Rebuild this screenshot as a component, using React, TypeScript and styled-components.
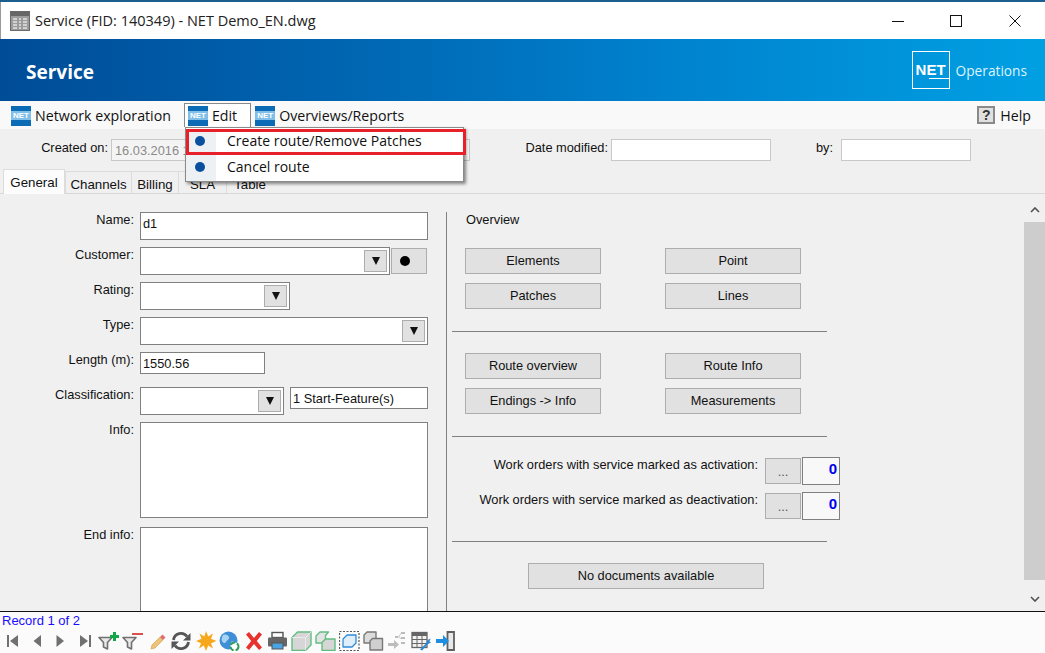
import styled, { createGlobalStyle } from "styled-components";

const GlobalStyle = createGlobalStyle`
  html, body {
    margin: 0;
    padding: 0;
    overflow: hidden;
    background: #f0f0f0;
  }
  * {
    box-sizing: border-box;
  }
`;

const funnel = <path d="M1 6.500h13L9.500 11.500v6.500L5.500 16v-4.500z" fill="#e8e8e8" stroke="#707070" strokeWidth="1.600" strokeLinejoin="round" />;

const TOOLS: { id: string; left: number; node: React.ReactNode }[] = [
  { id: "first", left: 7, node: <><rect x="0" y="4" width="2" height="12" fill="#707070" /><path d="M11 4v12L3 10z" fill="#707070" /></> },
  { id: "prev", left: 28, node: <path d="M13 4v12L5.500 10z" fill="#707070" /> },
  { id: "next", left: 51, node: <path d="M5.500 4v12L13 10z" fill="#707070" /> },
  { id: "last", left: 79, node: <><rect x="10" y="4" width="2" height="12" fill="#707070" /><path d="M1 4v12l8-6z" fill="#707070" /></> },
  { id: "filter-add", left: 98, node: <>{funnel}<path d="M12 5.500h9M16.500 1v9" stroke="#12a84a" strokeWidth="3" /></> },
  { id: "filter-remove", left: 122, node: <>{funnel}<path d="M10 3h11" stroke="#d9504c" strokeWidth="2" /></> },
  { id: "pencil", left: 147, node: <><path d="M5 14l8-8 3 3-8 8-4 1z" fill="#eec27a" stroke="#d8ac62" strokeWidth="0.800" /><path d="M13 6l2.500-2.500 3 3L16 9z" fill="#df6f6f" /></> },
  { id: "refresh", left: 171, node: <><path d="M2.500 9a7.500 7.500 0 0 1 13.500-3.500" fill="none" stroke="#555" strokeWidth="2.800" /><path d="M19.500 2v7.500H12z" fill="#555" /><path d="M17.500 11a7.500 7.500 0 0 1-13.500 3.500" fill="none" stroke="#555" strokeWidth="2.800" /><path d="M0.500 18v-7.500H8z" fill="#555" /></> },
  { id: "sun", left: 196, node: <path d="M10 0l2.200 5.500L17 2.500l-2 5.300 5.500 2.200-5.500 2.200 2 5.300-4.800-3-2.200 5.500-2.200-5.500-4.800 3 2-5.300L0 10l5.500-2.200-2-5.300 4.800 3z" fill="#f7a71c" /> },
  { id: "globe", left: 219, node: <><circle cx="9.500" cy="9.500" r="9" fill="#3f8fd6" /><path d="M4 4c3-1 5 0 6 2s-2 3-3 5-3 1-4-1 0-4 1-6zM12 11c2-1 4 0 4 1s-2 4-4 3z" fill="#a9d3f2" /><circle cx="15.500" cy="15.500" r="4" fill="#fff" stroke="#2f9e5b" strokeWidth="2" strokeDasharray="5 2" /></> },
  { id: "delete", left: 244, node: <path d="M2 3.500L5 1l5 6 5-6 3 2.500L12.800 10l5.200 6.500-3 2.500-5-6-5 6-3-2.500L7.200 10z" fill="#e8322d" /> },
  { id: "print", left: 267, node: <><rect x="5" y="1.500" width="11" height="5" fill="#fff" stroke="#555" strokeWidth="1.400" /><rect x="1" y="6.500" width="19" height="9" rx="1" fill="#666" /><rect x="5" y="12" width="11" height="6" fill="#4ba3e3" stroke="#555" /></> },
  { id: "box", left: 291, node: <><path d="M1 6.500L6.500 1h13.500v13L14.500 19.500H1z" fill="#d6d6d6" stroke="#62bd80" strokeWidth="1.400" strokeLinejoin="round" /><path d="M14.500 19.500V6.500H1M14.500 6.500L20 1" fill="none" stroke="#f0f0f0" strokeWidth="0.800" /></> },
  { id: "boxes", left: 315, node: <><path d="M1 5l4-4h8.500l-3 3.500V12H1z" fill="#e4e4e4" stroke="#62bd80" strokeWidth="1.400" strokeLinejoin="round" /><path d="M7 11.500l3.500-3.500H20v11.500H7z" fill="#d6d6d6" stroke="#62bd80" strokeWidth="1.400" strokeLinejoin="round" /></> },
  { id: "select", left: 339, node: <><rect x="0.500" y="0.500" width="19.500" height="19" fill="none" stroke="#555" strokeWidth="1.200" strokeDasharray="2 1.500" /><path d="M4 8l4-4h9v8l-4 4H4z" fill="#dfeefa" stroke="#2e8bd8" strokeWidth="1.300" strokeLinejoin="round" /></> },
  { id: "copy", left: 363, node: <><path d="M1 4l3-3h9v11H1z" fill="#dcdcdc" stroke="#787878" strokeWidth="1.400" strokeLinejoin="round" /><path d="M7 10l2.500-2.500H19.500V19H7z" fill="#cfcfcf" stroke="#787878" strokeWidth="1.400" strokeLinejoin="round" /></> },
  { id: "network", left: 388, node: <g fill="#bcbcbc"><path d="M0 12h6V9l5 4.500-5 4.500v-3H0z" /><rect x="7" y="5" width="3" height="2" /><rect x="13" y="1" width="4" height="2" /><rect x="13" y="6" width="4" height="2" /><rect x="13" y="11" width="4" height="2" /><path d="M10 6l3-4v1l-2 3 2 1v1z" /></g> },
  { id: "table", left: 411, node: <><rect x="1" y="1.500" width="15" height="15" fill="#f2f2f2" stroke="#666" strokeWidth="1.300" /><rect x="1" y="1.500" width="15" height="3.500" fill="#666" /><path d="M1 8.500h15M1 12.500h15M6 5v11.500M11 5v11.500" stroke="#666" /><path d="M9 18.500l6.500-6.500 1-3 3-1.500-1 3 1.500 1-3 1.500-6 6.500z" fill="#2b87d6" /></> },
  { id: "exit", left: 436, node: <><path d="M11.500 1h6.500v18h-6.500z" fill="#e8e8e8" stroke="#5f5f5f" strokeWidth="1.800" /><path d="M0 8h7V4l6 6-6 6v-4H0z" fill="#1e8fe0" /></> },
];

function NetIcon() {
  return <NetBadge>NET</NetBadge>;
}

function Combo({ width }: { width: number }) {
  return (
    <ComboBox $width={width}>
      <ComboButton>
        <svg width="10" height="8" viewBox="0 0 10 8">
          <path d="M1 0h8L5 8z" fill="#111" />
        </svg>
      </ComboButton>
    </ComboBox>
  );
}

function App() {
  return (
    <Page>
      <GlobalStyle />
      <TopEdge />
      <TitleBar>
        <svg width="20" height="20" viewBox="0 0 20 20">
          <rect x="0.500" y="0.500" width="19" height="19" fill="#9c9c9c" stroke="#6a6a6a" />
          <rect x="1" y="1" width="18" height="4" fill="#666" />
          <path d="M3 8h4M3 11h4M3 14h4M3 17h4M9 8h2M9 11h2M9 14h2M9 17h2M13 8h4M13 11h4M13 14h4M13 17h4" stroke="#e4e4e4" strokeWidth="1.500" />
        </svg>
        <TitleText>Service (FID: 140349) - NET Demo_EN.dwg</TitleText>
        <WindowButtons>
          <WindowButton>
            <svg width="12" height="12" viewBox="0 0 12 12"><path d="M0 6.500h12" stroke="#111" /></svg>
          </WindowButton>
          <WindowButton>
            <svg width="12" height="12" viewBox="0 0 12 12"><rect x="0.500" y="0.500" width="11" height="11" fill="none" stroke="#111" /></svg>
          </WindowButton>
          <WindowButton>
            <svg width="12" height="12" viewBox="0 0 12 12"><path d="M0.500 0.500l11 11M11.500 0.500l-11 11" stroke="#111" /></svg>
          </WindowButton>
        </WindowButtons>
      </TitleBar>
      <Banner>
        <BannerTitle>Service</BannerTitle>
        <BrandBox>
          NET
          <BrandRule />
        </BrandBox>
        <BrandName>Operations</BrandName>
      </Banner>
      <MenuBar>
        <MenuItem>
          <NetIcon />
          Network exploration
        </MenuItem>
        <MenuItem $open>
          <NetIcon />
          Edit
        </MenuItem>
        <MenuItem>
          <NetIcon />
          Overviews/Reports
        </MenuItem>
        <HelpItem>
          <HelpIcon>?</HelpIcon>
          Help
        </HelpItem>
      </MenuBar>
      <Dropdown>
        <DropdownItem $marked>
          <Bullet />
          Create route/Remove Patches
        </DropdownItem>
        <DropdownItem>
          <Bullet />
          Cancel route
        </DropdownItem>
      </Dropdown>
      <InfoRow>
        <InfoLabel $width={108}>Created on:</InfoLabel>
        <InfoField $width={359} $left={3} $disabled>16.03.2016 1</InfoField>
        <InfoLabel $width={138}>Date modified:</InfoLabel>
        <InfoField $width={160} $left={3} />
        <InfoLabel $width={62}>by:</InfoLabel>
        <InfoField $width={130} $left={8} />
      </InfoRow>
      <TabStrip>
        <Tab $active $width={62}>General</Tab>
        <Tab $width={66}>Channels</Tab>
        <Tab $width={47}>Billing</Tab>
        <Tab $width={48}>SLA</Tab>
        <Tab $width={47}>Table</Tab>
      </TabStrip>
      <Body>
        <FormColumn>
          <FormRow>
            <FieldLabel>Name:</FieldLabel>
            <TextBox $width={288} $height={28}>d1</TextBox>
          </FormRow>
          <FormRow>
            <FieldLabel>Customer:</FieldLabel>
            <Controls>
              <Combo width={250} />
              <DotButton><Dot /></DotButton>
            </Controls>
          </FormRow>
          <FormRow>
            <FieldLabel>Rating:</FieldLabel>
            <Combo width={150} />
          </FormRow>
          <FormRow>
            <FieldLabel>Type:</FieldLabel>
            <Combo width={288} />
          </FormRow>
          <FormRow $after={13}>
            <FieldLabel>Length (m):</FieldLabel>
            <TextBox $width={125} $height={22}>1550.56</TextBox>
          </FormRow>
          <FormRow>
            <FieldLabel>Classification:</FieldLabel>
            <Controls>
              <Combo width={144} />
              <TextBox $width={138} $height={22} $left={6}>1 Start-Feature(s)</TextBox>
            </Controls>
          </FormRow>
          <FormRow $after={9}>
            <FieldLabel>Info:</FieldLabel>
            <TextBox $width={288} $height={96} />
          </FormRow>
          <FormRow>
            <FieldLabel>End info:</FieldLabel>
            <TextBox $width={288} $height={96} />
          </FormRow>
        </FormColumn>
        <OverviewColumn>
          <SectionTitle>Overview</SectionTitle>
          <ButtonGrid>
            <ActionButton>Elements</ActionButton>
            <ActionButton>Point</ActionButton>
            <ActionButton>Patches</ActionButton>
            <ActionButton>Lines</ActionButton>
          </ButtonGrid>
          <Rule />
          <ButtonGrid>
            <ActionButton>Route overview</ActionButton>
            <ActionButton>Route Info</ActionButton>
            <ActionButton>Endings -&gt; Info</ActionButton>
            <ActionButton>Measurements</ActionButton>
          </ButtonGrid>
          <Rule />
          <WorkOrders>
            <WorkRow>
              <WorkLabel>Work orders with service marked as activation:</WorkLabel>
              <MoreButton>...</MoreButton>
              <CountBox>0</CountBox>
            </WorkRow>
            <WorkRow>
              <WorkLabel>Work orders with service marked as deactivation:</WorkLabel>
              <MoreButton>...</MoreButton>
              <CountBox>0</CountBox>
            </WorkRow>
          </WorkOrders>
          <Rule />
          <DocumentsButton>No documents available</DocumentsButton>
        </OverviewColumn>
        <ScrollBar>
          <ScrollArrow>
            <svg width="10" height="6" viewBox="0 0 10 6"><path d="M1 5l4-4 4 4" fill="none" stroke="#505050" strokeWidth="1.600" /></svg>
          </ScrollArrow>
          <ScrollThumb />
          <ScrollArrow>
            <svg width="10" height="6" viewBox="0 0 10 6"><path d="M1 1l4 4 4-4" fill="none" stroke="#505050" strokeWidth="1.600" /></svg>
          </ScrollArrow>
        </ScrollBar>
      </Body>
      <Footer>
        <RecordLine>Record 1 of 2</RecordLine>
        <Toolbar>
          {TOOLS.map((tool) => (
            <ToolIcon key={tool.id} width="21" height="20" viewBox="0 0 21 20" $left={tool.left}>
              {tool.node}
            </ToolIcon>
          ))}
        </Toolbar>
      </Footer>
    </Page>
  );
}

export default App;

const Page = styled.div`
  position: relative;
  width: 1045px;
  height: 653px;
  display: flex;
  flex-direction: column;
  overflow: hidden;
  background: #f0f0f0;
  font-family: "Liberation Sans", Arial, sans-serif;
  font-size: 12.800px;
  color: #111;
`;

const TopEdge = styled.div`
  height: 2px;
  background: #1c5f8f;
`;

const TitleBar = styled.div`
  height: 37px;
  display: flex;
  align-items: center;
  padding-left: 9px;
  background: #fff;
  border-left: 1px solid #9a9a9a;
`;

const TitleText = styled.span`
  margin-left: 5px;
  font-family: "Open Sans", sans-serif;
  font-size: 14.500px;
  color: #222;
`;

const WindowButtons = styled.div`
  margin-left: auto;
  display: flex;
  padding-right: 1px;
`;

const WindowButton = styled.div`
  width: 58.500px;
  height: 37px;
  display: flex;
  align-items: center;
  justify-content: center;
`;

const Banner = styled.div`
  height: 62px;
  display: flex;
  align-items: center;
  padding: 0 18px 0 26px;
  background: linear-gradient(90deg, #004c97 0%, #0067b3 35%, #0083cf 65%, #00a0e3 100%);
  color: #fff;
`;

const BannerTitle = styled.h1`
  margin: 3px auto 0 0;
  font-family: "Open Sans", sans-serif;
  font-size: 19px;
  font-weight: 700;
`;

const BrandBox = styled.div`
  position: relative;
  width: 38px;
  height: 38px;
  border: 1px solid #fff;
  font-size: 15px;
  font-weight: 700;
  line-height: 35px;
  text-align: center;
`;

const BrandRule = styled.div`
  position: absolute;
  left: 16px;
  right: 0;
  bottom: 9px;
  height: 1px;
  background: #fff;
`;

const BrandName = styled.span`
  margin-left: 6px;
  font-family: "Open Sans", sans-serif;
  font-size: 13.700px;
  color: #dff2fc;
`;

const MenuBar = styled.div`
  height: 28px;
  display: flex;
  align-items: flex-end;
  padding: 0 14px 2px 10px;
  background: #f9f9f9;
  font-family: "Open Sans", sans-serif;
  font-size: 14.200px;
`;

const MenuItem = styled.div<{ $open?: boolean }>`
  height: 24px;
  display: flex;
  align-items: center;
  gap: 4px;
  margin-right: ${(p) => (p.$open ? 3 : 12)}px;
  padding: 0 ${(p) => (p.$open ? 13 : 0)}px 0 ${(p) => (p.$open ? 3 : 0)}px;
  background: ${(p) => (p.$open ? "#fff" : "transparent")};
  border: 1px solid ${(p) => (p.$open ? "#8a8a8a" : "transparent")};
  border-bottom: none;
`;

const NetBadge = styled.span`
  width: 20px;
  height: 20px;
  flex: none;
  background: linear-gradient(180deg, #0b6cb5 0 25%, #7fbfe8 25% 70%, #0b6cb5 70%);
  font-family: "Liberation Sans", sans-serif;
  font-size: 8px;
  font-weight: 700;
  line-height: 19px;
  text-align: center;
  color: #fff;
`;

const HelpItem = styled.div`
  margin-left: auto;
  height: 24px;
  display: flex;
  align-items: center;
  gap: 5px;
`;

const HelpIcon = styled.span`
  width: 18px;
  height: 18px;
  border: 2px solid #8a8a8a;
  background: #e0e0e0;
  font-family: "Liberation Sans", sans-serif;
  font-size: 14px;
  font-weight: 700;
  line-height: 14px;
  text-align: center;
  color: #333;
`;

const Dropdown = styled.div`
  position: absolute;
  z-index: 5;
  left: 185px;
  top: 127px;
  width: 279px;
  height: 55px;
  padding-top: 1px;
  background: #fff;
  border: 1px solid #8a8a8a;
  box-shadow: 2px 2px 3px rgba(0, 0, 0, 0.45);
  font-family: "Open Sans", sans-serif;
  font-size: 14px;
`;

const DropdownItem = styled.div<{ $marked?: boolean }>`
  position: relative;
  height: 26px;
  display: flex;
  align-items: center;
  gap: 22px;
  padding: 0 0 4px 9px;
  background: linear-gradient(90deg, #eef1f4 0 30px, #fff 30px);
  ${(p) => p.$marked && "outline: 3px solid #e8202a; outline-offset: -3px; width: 280px;"}
`;

const Bullet = styled.span`
  width: 10px;
  height: 10px;
  flex: none;
  margin-top: 2px;
  border-radius: 50%;
  background: #0b4f9f;
`;

const InfoRow = styled.div`
  height: 43px;
  display: flex;
  align-items: flex-start;
  padding-top: 10px;
`;

const InfoLabel = styled.span<{ $width: number }>`
  width: ${(p) => p.$width}px;
  flex: none;
  padding-top: 1px;
  text-align: right;
`;

const InfoField = styled.div<{ $width: number; $left: number; $disabled?: boolean }>`
  width: ${(p) => p.$width}px;
  height: 22px;
  flex: none;
  margin-left: ${(p) => p.$left}px;
  padding: 3px;
  background: ${(p) => (p.$disabled ? "#f4f4f4" : "#fff")};
  border: 1px solid #c8c8c8;
  color: #8a8a8a;
`;

const TabStrip = styled.div`
  height: 22px;
  display: flex;
  align-items: flex-end;
  padding-left: 3px;
  border-bottom: 1px solid #d8d8d8;
`;

const Tab = styled.div<{ $active?: boolean; $width: number }>`
  width: ${(p) => p.$width}px;
  height: ${(p) => (p.$active ? 25 : 22)}px;
  margin-bottom: ${(p) => (p.$active ? -1 : 0)}px;
  padding-top: ${(p) => (p.$active ? 5 : 5)}px;
  background: ${(p) => (p.$active ? "#fcfcfc" : "#f0f0f0")};
  border: 1px solid #dcdcdc;
  border-width: 1px ${(p) => (p.$active ? 1 : 0)}px 0 1px;
  font-size: 13.300px;
  text-align: center;
`;

const Body = styled.div`
  height: 417px;
  display: flex;
  overflow: hidden;
`;

const FormColumn = styled.div`
  width: 446px;
  flex: none;
  padding-top: 18px;
`;

const FormRow = styled.div<{ $after?: number }>`
  display: grid;
  grid-template-columns: 134px 1fr;
  column-gap: 6px;
  margin-bottom: ${(p) => p.$after ?? 7}px;
`;

const FieldLabel = styled.label`
  padding-top: 1px;
  text-align: right;
  line-height: 14px;
`;

const Controls = styled.div`
  display: flex;
  align-items: flex-start;
`;

const TextBox = styled.div<{ $width: number; $height: number; $left?: number }>`
  width: ${(p) => p.$width}px;
  height: ${(p) => p.$height}px;
  flex: none;
  margin-left: ${(p) => p.$left ?? 0}px;
  padding: 3px 2px;
  background: #fff;
  border: 1px solid #808080;
`;

const ComboBox = styled.div<{ $width: number }>`
  width: ${(p) => p.$width}px;
  height: 28px;
  flex: none;
  display: flex;
  justify-content: flex-end;
  align-items: center;
  padding-right: 2px;
  background: #fff;
  border: 1px solid #808080;
`;

const ComboButton = styled.div`
  width: 23px;
  height: 22px;
  display: flex;
  align-items: center;
  justify-content: center;
  background: #e1e1e1;
  border: 1px solid #adadad;
`;

const DotButton = styled.div`
  width: 36px;
  height: 26px;
  margin: 1px 0 0 1px;
  display: flex;
  align-items: center;
  padding-left: 8px;
  background: #e1e1e1;
  border: 1px solid #adadad;
`;

const Dot = styled.span`
  width: 10px;
  height: 10px;
  border-radius: 50%;
  background: #000;
`;

const OverviewColumn = styled.div`
  flex: 1;
  margin-top: 18px;
  padding-top: 1px;
  border-left: 1px solid #808080;
`;

const SectionTitle = styled.div`
  margin-left: 19px;
  line-height: 14px;
`;

const ButtonGrid = styled.div`
  display: grid;
  grid-template-columns: 136px 136px;
  column-gap: 64px;
  row-gap: 9px;
  margin: 21px 0 22px 18px;
`;

const ActionButton = styled.div`
  height: 26px;
  display: flex;
  align-items: center;
  justify-content: center;
  padding-bottom: 2px;
  background: #e1e1e1;
  border: 1px solid #adadad;
`;

const DocumentsButton = styled(ActionButton)`
  width: 236px;
  margin: 21px 0 0 81px;
`;

const Rule = styled.div`
  width: 375px;
  height: 1px;
  margin-left: 5px;
  background: #808080;
`;

const WorkOrders = styled.div`
  display: flex;
  flex-direction: column;
  gap: 7px;
  margin: 20px 0 21px;
`;

const WorkRow = styled.div`
  display: flex;
  align-items: flex-start;
`;

const WorkLabel = styled.span`
  width: 311px;
  flex: none;
  padding-top: 1px;
  text-align: right;
  line-height: 14px;
`;

const MoreButton = styled.div`
  width: 36px;
  height: 26px;
  margin: 1px 0 0 7px;
  background: #e1e1e1;
  border: 1px solid #adadad;
  text-align: center;
  line-height: 26px;
  color: #555;
`;

const CountBox = styled.div`
  width: 38px;
  height: 28px;
  margin-left: 1px;
  padding-right: 2px;
  background: #f8f8f8;
  border: 1px solid #808080;
  font-size: 15px;
  font-weight: 700;
  line-height: 21px;
  text-align: right;
  color: #0000ee;
`;

const ScrollBar = styled.div`
  width: 21px;
  flex: none;
  margin-top: 4px;
  display: flex;
  flex-direction: column;
  background: #f0f0f0;
`;

const ScrollArrow = styled.div`
  height: 24px;
  flex: none;
  display: flex;
  align-items: center;
  justify-content: center;
`;

const ScrollThumb = styled.div`
  flex: 1;
  margin-bottom: 7px;
  background: #cdcdcd;
`;

const Footer = styled.div`
  flex: 1;
  background: #fbfbfb;
  border-top: 1px solid #111;
`;

const RecordLine = styled.div`
  height: 16px;
  padding: 1px 0 0 2px;
  font-size: 13px;
  line-height: 15px;
  color: #1a0dff;
`;

const Toolbar = styled.div`
  position: relative;
  height: 24px;
`;

const ToolIcon = styled.svg<{ $left: number }>`
  position: absolute;
  left: ${(p) => p.$left}px;
  top: 3px;
`;
